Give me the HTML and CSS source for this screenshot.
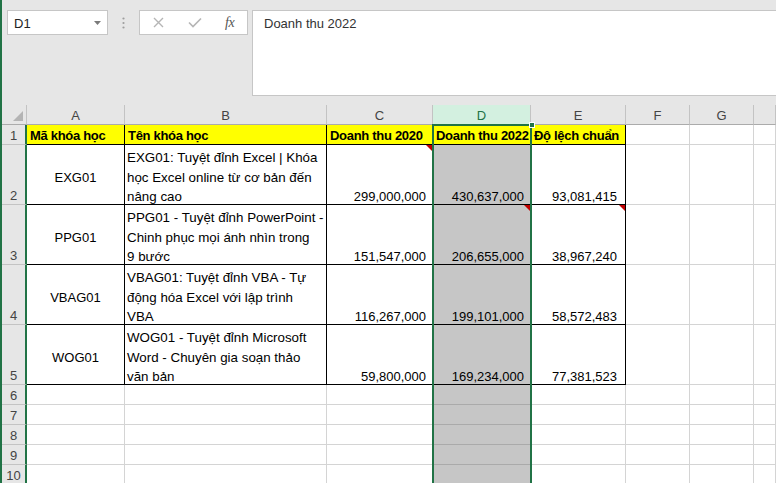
FILE: index.html
```html
<!DOCTYPE html>
<html>
<head>
<meta charset="utf-8">
<link rel="stylesheet" href="styles.css">
</head>
<body>
<div class="app">
  <div class="topbar">
    <div class="namebox">
      <span class="nb-text">D1</span>
      <svg class="nb-arrow" width="7" height="4" viewBox="0 0 7 4"><path d="M0 0 L7 0 L3.5 4 Z" fill="#7a7a7a"/></svg>
    </div>
    <div class="dots">
      <svg width="3" height="12" viewBox="0 0 3 12"><circle cx="1.5" cy="1.5" r="1.1" fill="#9d9d9d"/><circle cx="1.5" cy="6" r="1.1" fill="#9d9d9d"/><circle cx="1.5" cy="10.5" r="1.1" fill="#9d9d9d"/></svg>
    </div>
    <div class="fbtns">
      <svg class="fb-x" width="11" height="11" viewBox="0 0 11 11"><path d="M1 1 L10 10 M10 1 L1 10" stroke="#b5b5b5" stroke-width="1.4" fill="none"/></svg>
      <svg class="fb-ok" width="14" height="11" viewBox="0 0 14 11"><path d="M1 5.5 L5 9.5 L13 1.5" stroke="#b5b5b5" stroke-width="1.6" fill="none"/></svg>
      <span class="fx">fx</span>
    </div>
    <div class="fbox">Doanh thu 2022</div>
  </div>

  <div class="sheet">
    <div class="grid">
      <!-- header row -->
      <div class="c ch corner"><svg width="10" height="10" viewBox="0 0 10 10"><path d="M10 0 L10 10 L0 10 Z" fill="#b4b4b4"/></svg></div>
      <div class="c ch">A</div>
      <div class="c ch">B</div>
      <div class="c ch">C</div>
      <div class="c ch ch-sel">D</div>
      <div class="c ch">E</div>
      <div class="c ch">F</div>
      <div class="c ch">G</div>
      <div class="c ch"></div>

      <!-- row 1 -->
      <div class="c rh mid">1</div>
      <div class="c t hd">Mã khóa học</div>
      <div class="c t hd">Tên khóa học</div>
      <div class="c t hd">Doanh thu 2020</div>
      <div class="c t hd">Doanh thu 2022</div>
      <div class="c t hd">Độ lệch chuẩn</div>
      <div class="c"></div>
      <div class="c"></div>
      <div class="c"></div>

      <!-- row 2 -->
      <div class="c rh">2</div>
      <div class="c t code">EXG01</div>
      <div class="c t wrap">EXG01: Tuyệt đỉnh Excel | Khóa<br>học Excel online từ cơ bản đến<br>nâng cao</div>
      <div class="c t num note">299,000,000</div>
      <div class="c t num sd">430,637,000</div>
      <div class="c t num ne">93,081,415</div>
      <div class="c"></div>
      <div class="c"></div>
      <div class="c"></div>

      <!-- row 3 -->
      <div class="c rh">3</div>
      <div class="c t code">PPG01</div>
      <div class="c t wrap">PPG01 - Tuyệt đỉnh PowerPoint -<br>Chinh phục mọi ánh nhìn trong<br>9 bước</div>
      <div class="c t num">151,547,000</div>
      <div class="c t num sd note">206,655,000</div>
      <div class="c t num ne note">38,967,240</div>
      <div class="c"></div>
      <div class="c"></div>
      <div class="c"></div>

      <!-- row 4 -->
      <div class="c rh">4</div>
      <div class="c t code">VBAG01</div>
      <div class="c t wrap">VBAG01: Tuyệt đỉnh VBA - Tự<br>động hóa Excel với lập trình<br>VBA</div>
      <div class="c t num">116,267,000</div>
      <div class="c t num sd">199,101,000</div>
      <div class="c t num ne">58,572,483</div>
      <div class="c"></div>
      <div class="c"></div>
      <div class="c"></div>

      <!-- row 5 -->
      <div class="c rh">5</div>
      <div class="c t code">WOG01</div>
      <div class="c t wrap">WOG01 - Tuyệt đỉnh Microsoft<br>Word - Chuyên gia soạn thảo<br>văn bản</div>
      <div class="c t num">59,800,000</div>
      <div class="c t num sd">169,234,000</div>
      <div class="c t num ne">77,381,523</div>
      <div class="c"></div>
      <div class="c"></div>
      <div class="c"></div>

      <!-- rows 6-10 -->
      <div class="c rh mid">6</div><div class="c"></div><div class="c"></div><div class="c"></div><div class="c sd"></div><div class="c"></div><div class="c"></div><div class="c"></div><div class="c"></div>
      <div class="c rh mid">7</div><div class="c"></div><div class="c"></div><div class="c"></div><div class="c sd"></div><div class="c"></div><div class="c"></div><div class="c"></div><div class="c"></div>
      <div class="c rh mid">8</div><div class="c"></div><div class="c"></div><div class="c"></div><div class="c sd"></div><div class="c"></div><div class="c"></div><div class="c"></div><div class="c"></div>
      <div class="c rh mid">9</div><div class="c"></div><div class="c"></div><div class="c"></div><div class="c sd"></div><div class="c"></div><div class="c"></div><div class="c"></div><div class="c"></div>
      <div class="c rh mid">10</div><div class="c"></div><div class="c"></div><div class="c"></div><div class="c sd"></div><div class="c"></div><div class="c"></div><div class="c"></div><div class="c"></div>
    </div>
    <div class="selection"><span class="handle"></span></div>
  </div>
</div>
</body>
</html>
```

FILE: styles.css
```css
* { box-sizing: border-box; }
html, body { margin: 0; padding: 0; }
body {
  width: 776px;
  height: 483px;
  overflow: hidden;
  background: #e6e6e6;
  font-family: "Liberation Sans", Arial, sans-serif;
  font-size: 13px;
  color: #000;
}
.app {
  height: 483px;
  border-left: 2px solid #217346;
  display: flex;
  flex-direction: column;
  overflow: hidden;
}
.topbar {
  height: 105px;
  flex: none;
  display: flex;
  align-items: flex-start;
  padding: 10px 0 0 5px;
  background: #e6e6e6;
}
.namebox {
  width: 101px;
  height: 25px;
  background: #fff;
  border: 1px solid #c6c6c6;
  display: flex;
  align-items: center;
  justify-content: space-between;
  padding: 0 6px 0 6px;
  color: #222;
}
.nb-text { font-size: 13px; padding-top: 1px; }
.nb-arrow { margin-top: 1px; }
.dots {
  width: 31px;
  height: 25px;
  display: flex;
  align-items: center;
  justify-content: center;
  padding-top: 1px;
}
.fbtns {
  width: 109px;
  height: 25px;
  background: #fff;
  border: 1px solid #c6c6c6;
  display: flex;
  align-items: center;
  padding-left: 13px;
}
.fb-x { margin-right: 24px; }
.fb-ok { margin-right: 23px; }
.fx {
  font-family: "Liberation Serif", "Times New Roman", serif;
  font-style: italic;
  font-size: 14px;
  color: #555;
  letter-spacing: -0.5px;
}
.fbox {
  flex: 1;
  height: 86px;
  margin-left: 4px;
  background: #fff;
  border: 1px solid #c6c6c6;
  border-right: none;
  padding: 5px 0 0 11px;
  color: #333;
  font-size: 13px;
  line-height: 16px;
}
.sheet {
  position: relative;
  flex: 1;
  background: #fff;
  overflow: hidden;
}
.grid {
  display: grid;
  grid-template-columns: 25px 98px 202px 106px 98px 95px 64px 64px 1fr;
  grid-template-rows: 20px 20px 60px 60px 60px 60px 20px 20px 20px 20px 20px;
}
.c {
  border-right: 1px solid #d4d4d4;
  border-bottom: 1px solid #d4d4d4;
  overflow: hidden;
  white-space: nowrap;
  background: #fff;
}
.ch {
  background: #e6e6e6;
  border-right-color: #c3c3c3;
  border-bottom-color: #ababab;
  color: #444;
  text-align: center;
  line-height: 19px;
  padding-top: 1px;
}
.corner {
  display: flex;
  align-items: flex-end;
  justify-content: flex-end;
  padding: 0 3px 3px 0;
}
.ch-sel {
  background: #d3f0e0;
  color: #217346;
}
.rh {
  background: #e6e6e6;
  border-right: 2px solid #217346;
  border-bottom-color: #c3c3c3;
  color: #444;
  text-align: center;
  display: flex;
  align-items: flex-end;
  justify-content: center;
  line-height: 13px;
  padding-bottom: 2px;
}
.rh.mid { align-items: flex-start; padding: 1px 0 0 0; line-height: 19px; }
.t {
  border-right-color: #000;
  border-bottom-color: #000;
  position: relative;
}
.hd {
  background: #ffff00;
  font-weight: bold;
  line-height: 18px;
  padding: 2px 0 0 3px;
  letter-spacing: -0.3px;
}
.code {
  display: flex;
  align-items: center;
  justify-content: center;
  padding-top: 5px;
}
.wrap {
  font-size: 13.35px;
  line-height: 19.5px;
  padding: 3px 0 0 2px;
}
.num {
  display: flex;
  align-items: flex-end;
  justify-content: flex-end;
  padding: 0 6px 1px 0;
  line-height: 13px;
}
.ne { padding-right: 8px; }
.sd { background: #c6c6c6; }
.c.sd { border-bottom-color: #000; }
.grid > .c.sd:not(.t) { border-bottom-color: #aaaaaa; }
.note::after {
  content: "";
  position: absolute;
  top: 0;
  right: 0;
  border-left: 6px solid transparent;
  border-top: 6px solid #c00000;
}
.selection {
  position: absolute;
  left: 430px;
  top: 19px;
  width: 100px;
  height: 400px;
  border: 2px solid #217346;
  pointer-events: none;
}
.handle {
  position: absolute;
  right: -5px;
  top: -4px;
  width: 6px;
  height: 6px;
  background: #217346;
  border: 1px solid #fff;
}
```
